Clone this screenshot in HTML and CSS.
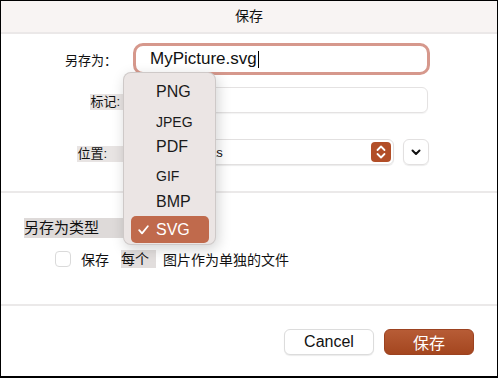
FILE: index.html
```html
<!DOCTYPE html>
<html lang="zh">
<head>
    <meta charset="UTF-8">
    <title>保存</title>
    <link rel="stylesheet" href="styles.css">
</head>
<body>
    <div class="window">
        <div class="titlebar">保存</div>

        <div class="section top">
            <div class="row row-name">
                <div class="label">另存为：</div>
                <div class="name-field">MyPicture.svg<span class="caret"></span></div>
            </div>
            <div class="row row-tags">
                <div class="label"><span class="hl">标记:</span></div>
                <div class="tags-field"></div>
            </div>
            <div class="row row-where">
                <div class="label"><span class="hl where">位置:</span></div>
                <div class="where-popup">
                    <span class="where-text">as</span>
                    <span class="stepper">
                        <svg width="12" height="16" viewBox="0 0 12 16">
                            <polyline points="2.5,6 6,2.5 9.5,6" fill="none" stroke="#fff" stroke-width="1.8" stroke-linecap="round" stroke-linejoin="round"/>
                            <polyline points="2.5,10 6,13.5 9.5,10" fill="none" stroke="#fff" stroke-width="1.8" stroke-linecap="round" stroke-linejoin="round"/>
                        </svg>
                    </span>
                </div>
                <div class="expand-btn">
                    <svg width="10" height="7" viewBox="0 0 10 7">
                        <polyline points="1.5,1.5 5,5 8.5,1.5" fill="none" stroke="#111" stroke-width="2" stroke-linecap="round" stroke-linejoin="round"/>
                    </svg>
                </div>
            </div>
        </div>

        <div class="section middle">
            <div class="row row-type">
                <span class="hl type-label">另存为类型</span>
                <div class="type-popup"></div>
            </div>
            <div class="row row-check">
                <span class="checkbox"></span>
                <span class="check-text">保存</span>
                <span class="hl each">每个</span>
                <span class="check-rest">图片作为单独的文件</span>
            </div>
        </div>

        <div class="footer">
            <button class="btn cancel">Cancel</button>
            <button class="btn save">保存</button>
        </div>

        <!-- 格式弹出菜单 -->
        <div class="menu">
            <div class="item big">PNG</div>
            <div class="item small jpeg">JPEG</div>
            <div class="item big pdf">PDF</div>
            <div class="item small gif">GIF</div>
            <div class="item big">BMP</div>
            <div class="item selected">
                <svg class="tick" width="11" height="10" viewBox="0 0 11 10">
                    <polyline points="1.2,5.2 4,8.4 9.8,1.2" fill="none" stroke="#fff" stroke-width="1.8" stroke-linecap="round" stroke-linejoin="round"/>
                </svg>SVG
            </div>
        </div>
    </div>
</body>
</html>
```

FILE: styles.css
```css
body {
    margin: 0;
    padding: 0;
    background: #fff;
    font-family: "Liberation Sans", "Noto Sans CJK SC", sans-serif;
    color: #111;
}
.window {
    position: relative;
    width: 498px;
    height: 378px;
    box-sizing: border-box;
    border: 1px solid #000;
    border-bottom-width: 2px;
    background: #fff;
    overflow: hidden;
}
.titlebar {
    height: 31px;
    line-height: 31px;
    text-align: center;
    font-size: 14px;
    background: #f8f4f3;
    border-bottom: 2px solid #ebe8e8;
}
.section {
    border-bottom: 2px solid #ebe9e9;
}
.section.top {
    padding: 9px 0 26px;
}
.section.middle {
    padding: 23px 0 36px;
}
.row {
    display: flex;
    align-items: center;
}
.label {
    width: 116px;
    text-align: right;
    font-size: 13px;
    flex-shrink: 0;
}
.hl {
    background: #e8e4e3;
}

/* 文件名 */
.row-name {
    height: 32px;
}
.name-field {
    margin-left: 16px;
    width: 297px;
    height: 32px;
    box-sizing: border-box;
    border: 3px solid #d6988c;
    border-radius: 10px;
    padding-left: 14px;
    font-size: 17px;
    line-height: 26px;
    display: flex;
    align-items: center;
}
.caret {
    display: inline-block;
    width: 1px;
    height: 17px;
    background: #000;
    margin-left: 1px;
}

/* 标记 */
.row-tags {
    margin-top: 12px;
    height: 26px;
}
.row-tags .label {
    width: 122px;
}
.row-tags .hl {
    padding: 0 3px 1px 0;
}
.tags-field {
    margin-left: 11px;
    width: 294px;
    height: 26px;
    box-sizing: border-box;
    border: 1px solid #e4e2e2;
    border-radius: 6px;
    box-shadow: 0 1px 1px rgba(0, 0, 0, 0.05);
}

/* 位置 */
.row-where {
    margin-top: 26px;
    height: 26px;
}
.row-where .label {
    width: 122px;
}
.hl.where {
    padding: 0 16px 1px 0;
}
.where-popup {
    margin-left: 11px;
    width: 260px;
    height: 26px;
    box-sizing: border-box;
    border: 1px solid #e2e0e0;
    border-radius: 6px;
    box-shadow: 0 1px 1px rgba(0, 0, 0, 0.08);
    display: flex;
    align-items: center;
    justify-content: space-between;
    padding: 0 2px 0 74px;
    font-size: 13px;
}
.stepper {
    width: 20px;
    height: 20px;
    border-radius: 4px;
    background: #b24e27;
    display: flex;
    align-items: center;
    justify-content: center;
}
.expand-btn {
    margin-left: 9px;
    width: 26px;
    height: 26px;
    box-sizing: border-box;
    border: 1px solid #e2e0e0;
    border-radius: 6px;
    box-shadow: 0 1px 1px rgba(0, 0, 0, 0.08);
    display: flex;
    align-items: center;
    justify-content: center;
}

/* 类型 */
.row-type {
    height: 24px;
}
.type-label {
    margin-left: 23px;
    width: 106px;
    height: 20px;
    line-height: 20px;
    font-size: 15px;
    background: #dedad9;
}
.type-popup {
    width: 86px;
    height: 24px;
    border-radius: 6px;
    background: #a8481f;
}
.row-check {
    margin-top: 10px;
    height: 18px;
    font-size: 14px;
}
.checkbox {
    margin-left: 54px;
    width: 16px;
    height: 16px;
    box-sizing: border-box;
    border: 1px solid #dadada;
    border-radius: 4px;
    background: #fff;
}
.check-text {
    margin-left: 10px;
}
.hl.each {
    margin-left: 12px;
    padding-right: 7px;
    height: 18px;
    line-height: 18px;
    background: #e2dedd;
}
.check-rest {
    margin-left: 7px;
}

/* 底部按钮 */
.footer {
    padding: 23px 23px 0 0;
    display: flex;
    justify-content: flex-end;
    gap: 10px;
}
.btn {
    width: 90px;
    height: 26px;
    border-radius: 6px;
    font-family: "Liberation Sans", "Noto Sans CJK SC", sans-serif;
    font-size: 16px;
    padding: 0;
}
.cancel {
    background: #fff;
    border: 1px solid #dcdcdc;
    box-shadow: 0 1px 1px rgba(0, 0, 0, 0.08);
    color: #111;
}
.save {
    background: linear-gradient(#b75c36, #a4461f);
    border: 1px solid #9c4220;
    color: #fff;
}

/* 菜单 */
.menu {
    position: absolute;
    left: 122px;
    top: 71px;
    width: 91px;
    padding: 6px 0 1px;
    background: #ebe5e4;
    border-radius: 8px;
    border: 0.5px solid rgba(0, 0, 0, 0.12);
    box-shadow: 2px 4px 14px rgba(0, 0, 0, 0.18);
}
.item {
    padding-left: 32px;
    color: #1a1a1a;
}
.item.big {
    height: 26px;
    line-height: 26px;
    font-size: 16px;
}
.item.pdf {
    height: 24px;
    line-height: 24px;
}
.item.small {
    font-size: 14px;
}
.item.jpeg {
    height: 30px;
    line-height: 26px;
    padding-top: 4px;
    box-sizing: border-box;
}
.item.gif {
    height: 30px;
    line-height: 25px;
    padding-top: 5px;
    box-sizing: border-box;
}
.item.selected {
    margin: 1px 6px 0 7px;
    padding-left: 7px;
    height: 27px;
    line-height: 27px;
    border-radius: 5px;
    background: #c06a4c;
    color: #fff;
    font-size: 16px;
    display: flex;
    align-items: center;
}
.tick {
    margin-right: 7px;
}
```
